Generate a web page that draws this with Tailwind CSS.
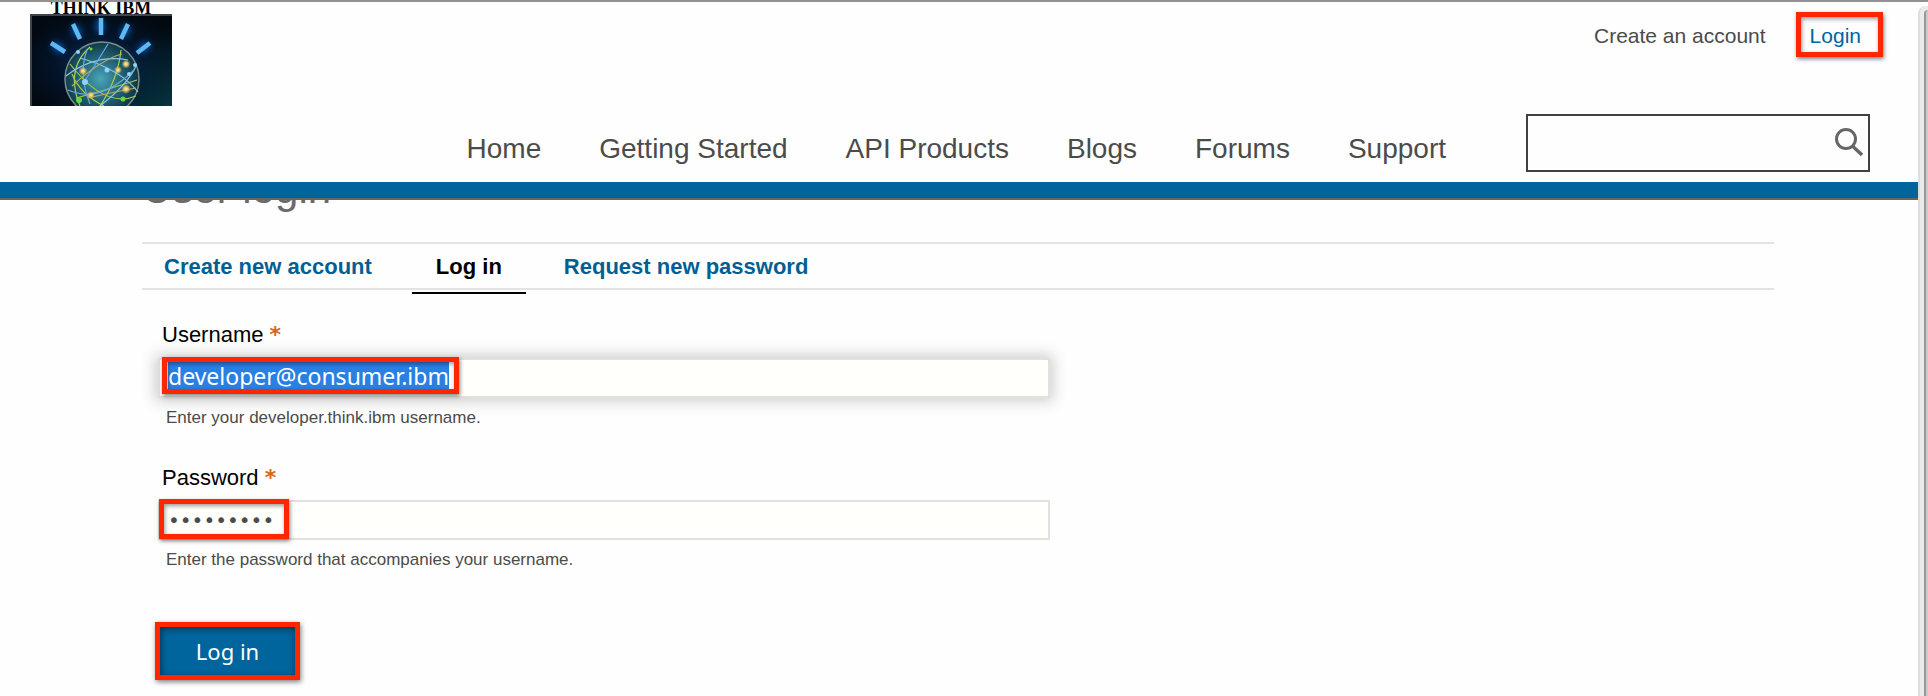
<!DOCTYPE html>
<html lang="en">
<head>
<meta charset="utf-8">
<title>User login</title>
<script src="https://cdn.jsdelivr.net/npm/@tailwindcss/browser@4"></script>
</head>
<body class="flex min-h-screen flex-col overflow-hidden border-t-2 border-[#919191] bg-[#fefefe] font-['Liberation_Sans',sans-serif]">
<div class="flex flex-1">
  <div class="min-w-0 flex-1">
    <header class="relative z-10 border-b-2 border-[#666] bg-[#fefefe]">
      <div class="flex items-start justify-between pl-[30px] pr-[35px]">
        <a href="#" class="flex w-[142px] flex-col text-black">
          <span class="block h-3 whitespace-nowrap text-center font-['Liberation_Serif',serif] text-[18px]/[12px] font-bold">THINK IBM</span>
          <svg class="block h-[92px] w-[142px]" viewBox="0 0 142 92" aria-hidden="true">
            <defs>
              <radialGradient id="sky" cx=".5" cy=".55" r=".6"><stop offset="0" stop-color="#0a3f78"/><stop offset=".5" stop-color="#03152b"/><stop offset="1" stop-color="#020910"/></radialGradient>
              <linearGradient id="edge" x1="0" y1="0" x2="1" y2="1"><stop offset=".55" stop-color="#053845" stop-opacity="0"/><stop offset="1" stop-color="#06404c" stop-opacity=".8"/></linearGradient>
              <radialGradient id="globe" cx=".48" cy=".5" r=".52"><stop offset="0" stop-color="#4aa5b8"/><stop offset=".5" stop-color="#26697e"/><stop offset="1" stop-color="#0d3444"/></radialGradient>
              <radialGradient id="glow"><stop offset="0" stop-color="#fff3b0"/><stop offset=".4" stop-color="#e6c468"/><stop offset="1" stop-color="#e6b84e" stop-opacity="0"/></radialGradient>
              <filter id="soft" x="-1" y="-1" width="3" height="3"><feGaussianBlur stdDeviation="3"/></filter>
            </defs>
            <rect width="142" height="92" fill="url(#sky)"/>
            <rect width="142" height="92" fill="url(#edge)"/>
            <path d="M0 1h142M1 0v92" stroke="#3c464c" stroke-width="2"/>
            <g fill="none" stroke-linecap="butt">
              <g stroke="#0b55b0" stroke-width="8" filter="url(#soft)"><path d="M70 6v12M44 12l5 10M98 12l-5 10M23 30l10 7M119 30l-10 7"/></g>
              <g stroke="#5db9f2" stroke-width="4.5"><path d="M71 4v17M43 10l7 15M98 10l-7 15M21 29l14 9M120 29l-13 10"/></g>
            </g>
            <circle cx="72" cy="65" r="37" fill="url(#globe)" stroke="#7b8f8a" stroke-width="1.5"/>
            <g fill="none" stroke-width="1.2">
              <path d="M60 33Q35 55 50 92M91 36Q88 65 70 92" stroke="#a8d252"/>
              <path d="M40 50Q75 95 106 82M46 84Q80 75 107 66M42 60Q50 80 74 92" stroke="#a8c84a"/>
              <path d="M36 62Q65 40 98 46M50 44Q90 55 108 78M70 92Q98 70 106 52" stroke="#8ccbd8"/>
              <path d="M38 76Q70 90 104 56M57 36Q48 60 60 90M78 30Q66 50 54 68" stroke="#6ba6e0"/>
              <path d="M42 72Q72 45 92 40M58 84Q84 78 106 74" stroke="#b9a866"/>
            </g>
            <g fill="url(#glow)"><circle cx="53" cy="57" r="4.5"/><circle cx="96" cy="50" r="4.5"/><circle cx="88" cy="56" r="4"/><circle cx="96" cy="75" r="5"/><circle cx="61" cy="81" r="4"/></g>
            <g fill="#8fd2fa"><circle cx="48" cy="38" r="2"/><circle cx="77" cy="56" r="2.5"/><circle cx="55" cy="68" r="3"/><circle cx="105" cy="51" r="2"/><circle cx="99" cy="60" r="2"/></g>
            <g fill="#63d83f"><circle cx="49" cy="86" r="3"/><circle cx="93" cy="85" r="2.5"/><circle cx="61" cy="35" r="1.5"/></g>
          </svg>
        </a>
        <div class="flex items-center gap-[30px] pt-[10px] text-[21px]/6">
          <a href="#" class="pt-0.5 text-[#4b4b4b]">Create an account</a>
          <a href="#" class="h-[45px] border-[5px] border-[#ff2600] pl-[9px] pr-[17px] pt-[7px] text-[#00649d] shadow-[1px_2px_4px_rgba(0,0,0,.5),inset_1px_2px_4px_rgba(0,0,0,.4)]">Login</a>
        </div>
      </div>
      <div class="-mt-1 flex items-start justify-end border-b-16 border-[#00649d] pb-[10px] pr-12 pt-3">
        <nav class="mr-[80px] flex gap-[58px] whitespace-nowrap pt-[19px] text-[28px]/8 text-[#4b4b4b]">
          <a href="#">Home</a>
          <a href="#">Getting Started</a>
          <a href="#">API Products</a>
          <a href="#">Blogs</a>
          <a href="#">Forums</a>
          <a href="#">Support</a>
        </nav>
        <form class="flex h-[58px] w-[344px] border-2 border-[#404040]" role="search">
          <input type="search" aria-label="Search" class="min-w-0 flex-1 bg-transparent px-3 text-[21px] outline-none">
          <button type="button" aria-label="Search" class="flex w-[38px] items-start pt-[10px]">
            <svg class="size-8 overflow-visible" viewBox="0 0 32 32" fill="none" stroke="#666" stroke-width="3" aria-hidden="true"><circle cx="16" cy="13" r="9.5"/><path d="M22.5 20l9.500 9" stroke-width="3.5"/></svg>
          </button>
        </form>
      </div>
    </header>

    <main class="-mt-[35px] pl-[142px] pr-36">
      <h1 class="text-[42px]/[48px] text-[#6a6a6a]">User login</h1>
      <nav class="mt-[29px] flex h-12 gap-[14px] border-y-2 border-[#e3e3e3] text-[22px]/6 font-bold whitespace-nowrap text-[#005f94]">
        <a href="#" class="h-[50px] pb-[13px] pl-[22px] pr-[26px] pt-[11px]">Create new account</a>
        <a href="#" aria-current="page" class="h-[50px] border-b-2 border-black px-6 pb-[13px] pt-[11px] text-black">Log in</a>
        <a href="#" class="h-[50px] px-6 pb-[13px] pt-[11px]">Request new password</a>
      </nav>

      <form class="ml-4 mt-[33px] max-w-[892px]">
        <div>
          <label for="user" class="block pl-1 text-[22px]/6 text-black">Username <span class="font-['DejaVu_Sans',sans-serif] font-bold text-[#d9661a]">*</span></label>
          <div class="relative mt-[11px]">
            <input id="user" type="text" value="developer@consumer.ibm" class="block h-10 w-full border-2 border-[#e2e2dd] bg-[#fffffc] px-2 pb-1 font-['Noto_Sans',sans-serif] text-[23px] text-[#4b4b4b] shadow-[0_0_14px_3px_rgba(0,0,0,.2)] outline-none selection:bg-[#2a80e2] selection:text-white">
            <span class="pointer-events-none absolute -top-px left-1 h-[37px] w-[297px] border-[5px] border-[#ff2600] shadow-[1px_2px_4px_rgba(0,0,0,.5),inset_1px_2px_4px_rgba(0,0,0,.4)]"></span>
          </div>
          <p class="mt-[10px] pl-2 text-[17px]/5 text-[#4b4b4b]">Enter your developer.think.ibm username.</p>
        </div>
        <div class="mt-[38px]">
          <label for="pass" class="block pl-1 text-[22px]/6 text-black">Password <span class="font-['DejaVu_Sans',sans-serif] font-bold text-[#d9661a]">*</span></label>
          <div class="relative mt-[10px]">
            <input id="pass" type="password" value="ibmlogin1" class="block h-10 w-full border-2 border-[#e2e2dd] bg-[#fffffc] px-2 font-['DejaVu_Sans',sans-serif] text-[20px] text-[#4b4b4b] outline-none">
            <span class="pointer-events-none absolute -top-px left-px h-10 w-[130px] border-[5px] border-[#ff2600] shadow-[1px_2px_4px_rgba(0,0,0,.5),inset_1px_2px_4px_rgba(0,0,0,.4)]"></span>
          </div>
          <p class="mt-[10px] pl-2 text-[17px]/5 text-[#4b4b4b]">Enter the password that accompanies your username.</p>
        </div>
        <button type="button" class="-ml-[3px] mt-[52px] block h-[58px] w-[145px] border-[5px] border-[#ff2600] bg-[#00649d] font-['Noto_Sans',sans-serif] text-[22px]/8 text-white shadow-[1px_2px_5px_rgba(0,0,0,.5),inset_1px_2px_6px_rgba(0,0,0,.5)]">Log in</button>
      </form>
    </main>
  </div>
  <div class="mt-1 flex w-[10px] shrink-0 justify-end rounded-tl-lg border-l-2 border-[#dedede] bg-[#ebebeb]" aria-hidden="true">
    <div class="mt-1 w-1 rounded-tl border-l-2 border-[#979797] bg-[#cacaca]"></div>
  </div>
</div>
<script>
  document.getElementById('user').select();
</script>
</body>
</html>
